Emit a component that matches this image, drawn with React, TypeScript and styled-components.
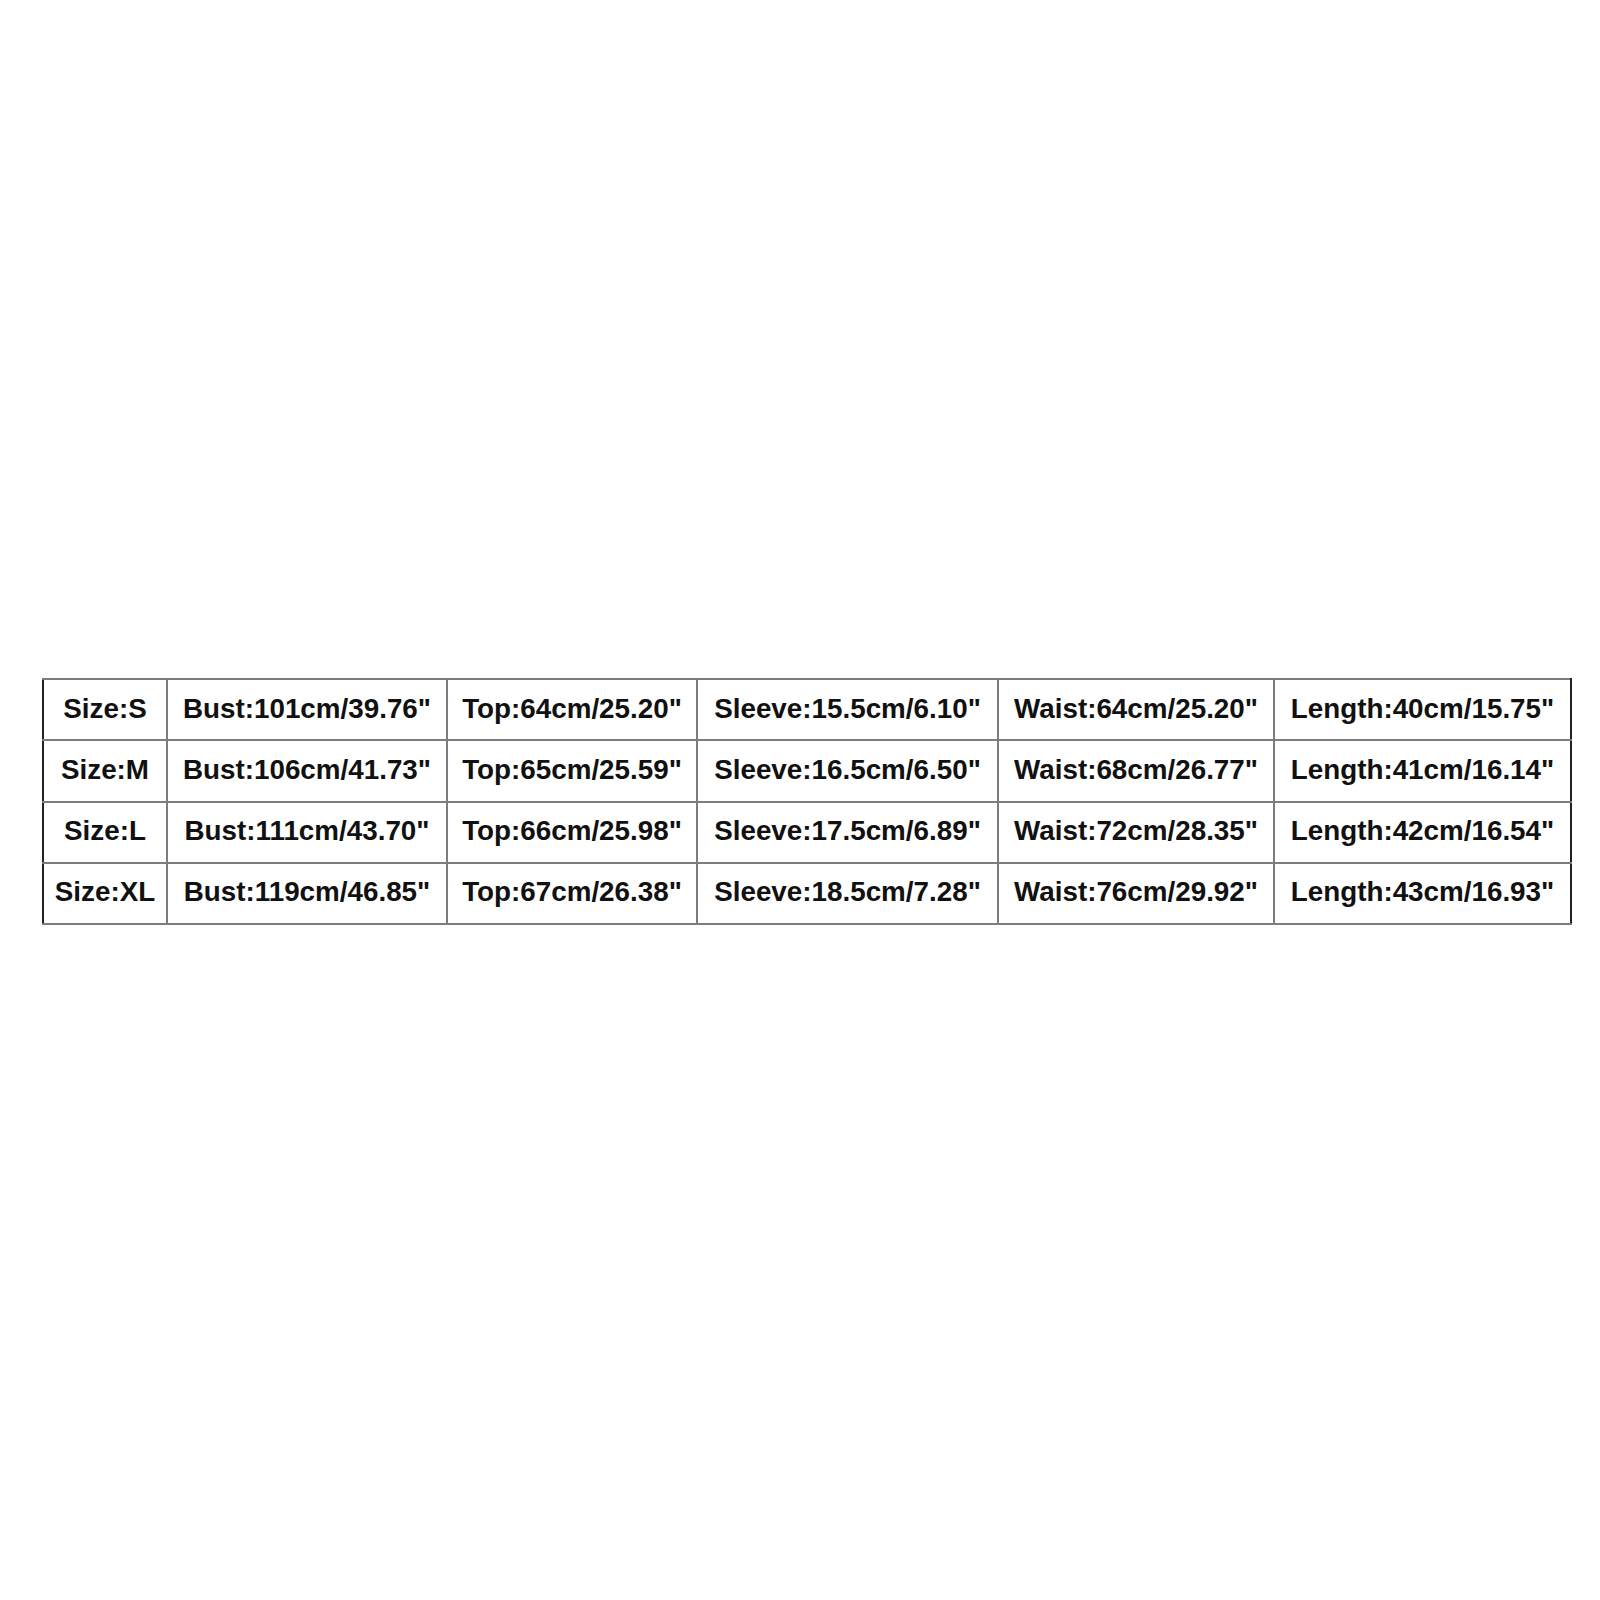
import React from "react";
import styled, { createGlobalStyle } from "styled-components";

const Global = createGlobalStyle`
  html, body {
    margin: 0;
    padding: 0;
    background: #ffffff;
  }
  body {
    width: 1600px;
    height: 1600px;
    font-family: "Liberation Sans", Arial, sans-serif;
  }
`;

const Page = styled.div`
  width: 1600px;
  height: 1600px;
  box-sizing: border-box;
  padding-top: 678px;
  padding-left: 42px;
  background: #ffffff;
`;

const Table = styled.table`
  border-collapse: collapse;
  width: 1528px;
  table-layout: fixed;
  border: 2px solid #222222;
`;

const Row = styled.tr`
  height: 61.25px;
`;

const Cell = styled.td`
  border: 2px solid #7c7c7c;
  padding: 0 0 2px 0;
  text-align: center;
  vertical-align: middle;
  font-family: "Liberation Sans", Arial, sans-serif;
  font-weight: 700;
  font-size: 27.8px;
  color: #111111;
  white-space: nowrap;
  line-height: 1;
  &:first-child {
    border-left: 2px solid #222222;
  }
  &:last-child {
    border-right: 2px solid #222222;
  }
`;

const widths = [124, 280, 250, 301, 276, 297];

const rows: string[][] = [
  ["Size:S", "Bust:101cm/39.76\"", "Top:64cm/25.20\"", "Sleeve:15.5cm/6.10\"", "Waist:64cm/25.20\"", "Length:40cm/15.75\""],
  ["Size:M", "Bust:106cm/41.73\"", "Top:65cm/25.59\"", "Sleeve:16.5cm/6.50\"", "Waist:68cm/26.77\"", "Length:41cm/16.14\""],
  ["Size:L", "Bust:111cm/43.70\"", "Top:66cm/25.98\"", "Sleeve:17.5cm/6.89\"", "Waist:72cm/28.35\"", "Length:42cm/16.54\""],
  ["Size:XL", "Bust:119cm/46.85\"", "Top:67cm/26.38\"", "Sleeve:18.5cm/7.28\"", "Waist:76cm/29.92\"", "Length:43cm/16.93\""],
];

export default function App() {
  return (
    <>
      <Global />
      <Page>
        <Table>
          <colgroup>
            {widths.map((w, i) => (
              <col key={i} style={{ width: w }} />
            ))}
          </colgroup>
          <tbody>
            {rows.map((r, i) => (
              <Row key={i}>
                {r.map((c, j) => (
                  <Cell key={j}>{c}</Cell>
                ))}
              </Row>
            ))}
          </tbody>
        </Table>
      </Page>
    </>
  );
}
